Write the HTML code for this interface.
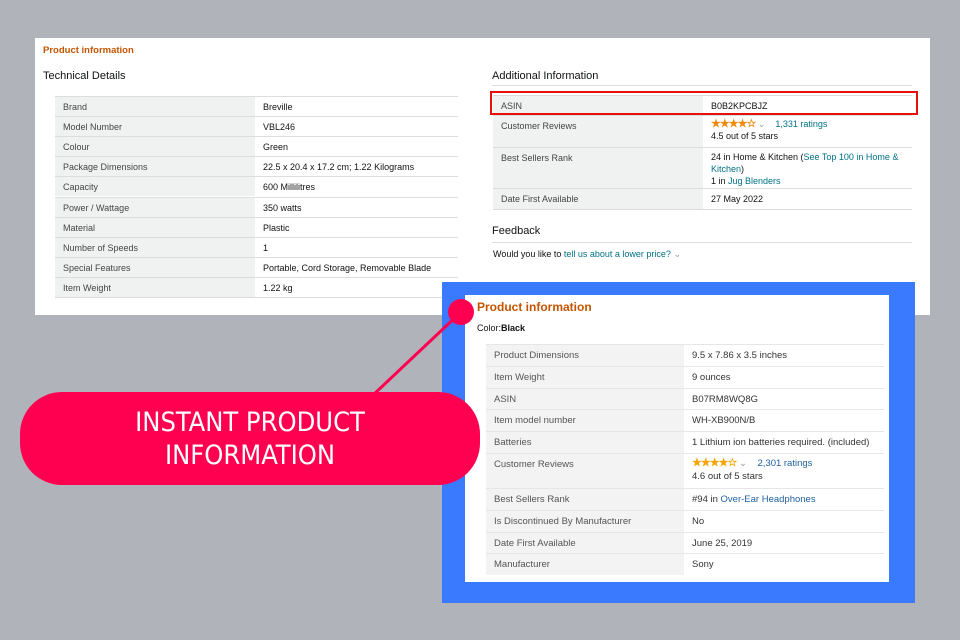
<!DOCTYPE html>
<html><head><meta charset="utf-8"><style>
*{margin:0;padding:0;box-sizing:border-box}
body{width:960px;height:640px;background:#b0b3ba;position:relative;overflow:hidden;font-family:"Liberation Sans",sans-serif;color:#0f1111}
.abs{position:absolute}
.row{position:absolute;border-top:1px solid #dcdede;font-size:9px;}
.row .l{position:absolute;left:0;top:0;bottom:0;background:#f0f2f2;color:#444;padding-left:8px;}
.row .v{position:absolute;top:0;bottom:0;right:0;color:#111;white-space:nowrap}
.row .t{position:absolute;top:5px;white-space:nowrap}
.lk{color:#007185}
.star{color:#f08a0e;letter-spacing:-1px;font-size:11px}
.b2 .row{font-size:9.5px;border-top:1px solid #e6e6e6}
.b2 .row .l{background:#f3f3f3;color:#555;padding-left:8px}
.b2 .row .v{color:#333}
.b2 .lk{color:#2162a1}
</style></head><body>
<div class="abs" style="left:35px;top:38px;width:895px;height:277px;background:#fff"></div>
<div class="abs" style="left:43px;top:45px;font-size:9.5px;font-weight:bold;color:#c45500">Product information</div>
<div class="abs" style="left:43px;top:70px;font-size:11px">Technical Details</div>
<div class="abs" style="left:492px;top:70px;font-size:11px">Additional Information</div>
<div id="t1"></div>
<div class="abs" style="left:55px;top:297px;width:403px;border-top:1px solid #dcdede"></div>
<div class="abs" style="left:492px;top:85px;width:420px;border-top:1px solid #dcdede"></div>
<div class="row" style="left:493px;top:95px;width:419px;height:20px"><div class="l" style="width:210px"><span class="t">ASIN</span></div><div class="v" style="left:218px"><span class="t">B0B2KPCBJZ</span></div></div>
<div class="row" style="left:493px;top:115px;width:419px;height:32px"><div class="l" style="width:210px"><span class="t">Customer Reviews</span></div><div class="v" style="left:218px"><span class="t" style="top:2px;line-height:12px"><b class="star">★★★★☆</b> <span style="color:#999">⌄</span>&nbsp;&nbsp;&nbsp; <span class="lk">1,331 ratings</span><br>4.5 out of 5 stars</span></div></div>
<div class="row" style="left:493px;top:147px;width:419px;height:41px"><div class="l" style="width:210px"><span class="t">Best Sellers Rank</span></div><div class="v" style="left:218px"><span class="t" style="line-height:12px;top:3px">24 in Home &amp; Kitchen (<span class="lk">See Top 100 in Home &amp;</span><br><span class="lk">Kitchen</span>)<br>1 in <span class="lk">Jug Blenders</span></span></div></div>
<div class="row" style="left:493px;top:188px;width:419px;height:21px"><div class="l" style="width:210px"><span class="t">Date First Available</span></div><div class="v" style="left:218px"><span class="t">27 May 2022</span></div></div>
<div class="abs" style="left:493px;top:209px;width:419px;border-top:1px solid #dcdede"></div>
<div class="abs" style="left:490px;top:91px;width:428px;height:24px;border:2px solid #e8100a"></div>
<div class="abs" style="left:492px;top:225px;font-size:11px">Feedback</div>
<div class="abs" style="left:492px;top:242px;width:420px;border-top:1px solid #dcdede"></div>
<div class="abs" style="left:493px;top:249px;font-size:9px">Would you like to <span class="lk">tell us about a lower price?</span> <span style="color:#999">⌄</span></div>

<div class="abs" style="left:442px;top:282px;width:473px;height:321px;background:#3a7afe"></div>
<div class="abs b2" style="left:465px;top:295px;width:424px;height:287px;background:#fff">
<div class="abs" style="left:12px;top:5px;font-size:12px;font-weight:bold;color:#c45500">Product information</div>
<div class="abs" style="left:12px;top:28px;font-size:9px">Color:<b>Black</b></div>
<div id="t2"></div>
</div>

<svg class="abs" style="left:0;top:0" width="960" height="640"><line x1="372" y1="396" x2="461" y2="312" stroke="#ff0050" stroke-width="3"/><circle cx="461" cy="312" r="13" fill="#ff0050"/></svg>
<div class="abs" style="left:20px;top:392px;width:460px;height:93px;border-radius:42px;background:#ff0050;color:#fff;text-align:center;font-family:'DejaVu Sans Condensed','DejaVu Sans',sans-serif;font-size:27px;line-height:33px;padding-top:14px">INSTANT PRODUCT<br>INFORMATION</div>
<script>
var r1=[["Brand","Breville"],["Model Number","VBL246"],["Colour","Green"],["Package Dimensions","22.5 x 20.4 x 17.2 cm; 1.22 Kilograms"],["Capacity","600 Millilitres"],["Power / Wattage","350 watts"],["Material","Plastic"],["Number of Speeds","1"],["Special Features","Portable, Cord Storage, Removable Blade"],["Item Weight","1.22 kg"]];
var h="";r1.forEach(function(r,i){h+='<div class="row" style="left:55px;top:'+(96+i*20.1)+'px;width:403px;height:20.1px"><div class="l" style="width:200px"><span class="t">'+r[0]+'</span></div><div class="v" style="left:208px"><span class="t">'+r[1]+'</span></div></div>'});
document.getElementById("t1").outerHTML=h;
var r2=[["Product Dimensions","9.5 x 7.86 x 3.5 inches",22],["Item Weight","9 ounces",22],["ASIN","B07RM8WQ8G",21],["Item model number","WH-XB900N/B",22],["Batteries","1 Lithium ion batteries required. (included)",22],["Customer Reviews",'<b class="star" style="color:#f5a400">★★★★☆</b> <span style="color:#999">⌄</span>&nbsp;&nbsp;&nbsp; <span class="lk">2,301 ratings</span><br>4.6 out of 5 stars',35],["Best Sellers Rank",'#94 in <span class="lk">Over-Ear Headphones</span>',22],["Is Discontinued By Manufacturer","No",22],["Date First Available","June 25, 2019",21],["Manufacturer","Sony",22]];
h="";var y=49;r2.forEach(function(r){h+='<div class="row" style="left:21px;top:'+y+'px;width:398px;height:'+r[2]+'px"><div class="l" style="width:198px"><span class="t">'+r[0]+'</span></div><div class="v" style="left:206px"><span class="t" style="line-height:13px;top:'+(r[2]>30?3:4)+'px">'+r[1]+'</span></div></div>';y+=r[2]});
document.getElementById("t2").outerHTML=h;
</script>
</body></html>
